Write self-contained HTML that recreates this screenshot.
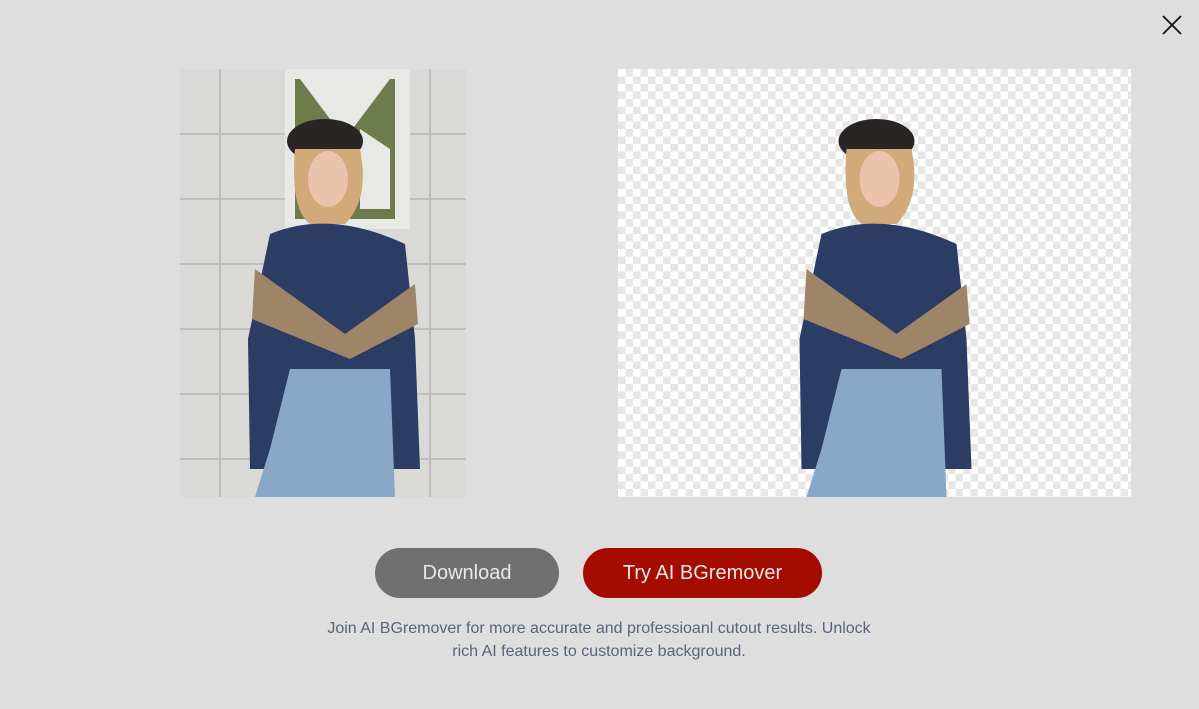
<!DOCTYPE html>
<html><head><meta charset="utf-8"><style>
body{margin:0;width:1199px;height:709px;background:#dedede;position:relative;overflow:hidden;font-family:"Liberation Sans",Arial,sans-serif}
.abs{position:absolute}
#left{left:180px;top:69px;width:286px;height:428px;background:#d9d9d7}
#right{left:618px;top:69px;width:513px;height:428px;background-color:#fff;
background-image:linear-gradient(45deg,#e6e6e6 25%,transparent 25%,transparent 75%,#e6e6e6 75%),linear-gradient(45deg,#e6e6e6 25%,transparent 25%,transparent 75%,#e6e6e6 75%);
background-size:15px 15px;background-position:0 0,7.5px 7.5px}
.btn{top:548px;height:50px;border-radius:25px;color:#e8e8e8;font-size:20px;line-height:50px;text-align:center}
</style></head><body>
<svg class="abs" style="left:1160px;top:13px" width="24" height="24" viewBox="0 0 24 24"><path d="M3 3L21 21M21 3L3 21" stroke="#111" stroke-width="1.8"/></svg>
<div id="left" class="abs">
<svg width="286" height="428" viewBox="0 0 286 428">
<g stroke="#bdbdbb" stroke-width="2">
<path d="M0 65H286M0 130H286M0 195H286M0 260H286M0 325H286M0 390H286M40 0V428M250 0V428"/>
</g>
<rect x="105" y="0" width="125" height="160" fill="#e8e8e6"/>
<path d="M115 10h100v140h-100z" fill="#6e7b4a"/>
<path d="M120 10 L210 10 L165 70Z M120 80 L150 60 L150 140 L120 140Z M180 60 L210 80 L210 140 L180 140Z" fill="#e8e8e6"/>
<ellipse cx="145" cy="72" rx="38" ry="22" fill="#2a2525"/>
<path d="M115 80 Q110 140 130 155 L165 155 Q190 130 180 80Z" fill="#d2a978"/>
<ellipse cx="148" cy="110" rx="20" ry="28" fill="#e9c3ab"/>
<path d="M90 165 Q150 140 225 175 L235 270 L240 400 L210 400 L205 310 L110 310 L100 400 L70 400 L68 270Z" fill="#2b3d63"/>
<path d="M75 200 L165 265 L235 215 L238 255 L170 290 L72 250Z" fill="#9e8568"/>
<path d="M110 300 L210 300 L215 428 L75 428 L90 380Z" fill="#89a8c8"/>
</svg>
</div>
<div id="right" class="abs">
<svg width="513" height="428" viewBox="0 0 286 428" preserveAspectRatio="xMidYMid meet" style="position:absolute;left:0;top:0">
<ellipse cx="145" cy="72" rx="38" ry="22" fill="#2a2525"/>
<path d="M115 80 Q110 140 130 155 L165 155 Q190 130 180 80Z" fill="#d2a978"/>
<ellipse cx="148" cy="110" rx="20" ry="28" fill="#e9c3ab"/>
<path d="M90 165 Q150 140 225 175 L235 270 L240 400 L210 400 L205 310 L110 310 L100 400 L70 400 L68 270Z" fill="#2b3d63"/>
<path d="M75 200 L165 265 L235 215 L238 255 L170 290 L72 250Z" fill="#9e8568"/>
<path d="M110 300 L210 300 L215 428 L75 428 L90 380Z" fill="#89a8c8"/>
</svg>
</div>
<div class="abs btn" style="left:375px;width:184px;background:#707070">Download</div>
<div class="abs btn" style="left:583px;width:239px;background:#a50c00">Try AI BGremover</div>
<div class="abs" style="left:300px;width:598px;top:617px;font-size:16px;line-height:23px;color:#5a6478;text-align:center">Join AI BGremover for more accurate and professioanl cutout results. Unlock<br>rich AI features to customize background.</div>
</body></html>
